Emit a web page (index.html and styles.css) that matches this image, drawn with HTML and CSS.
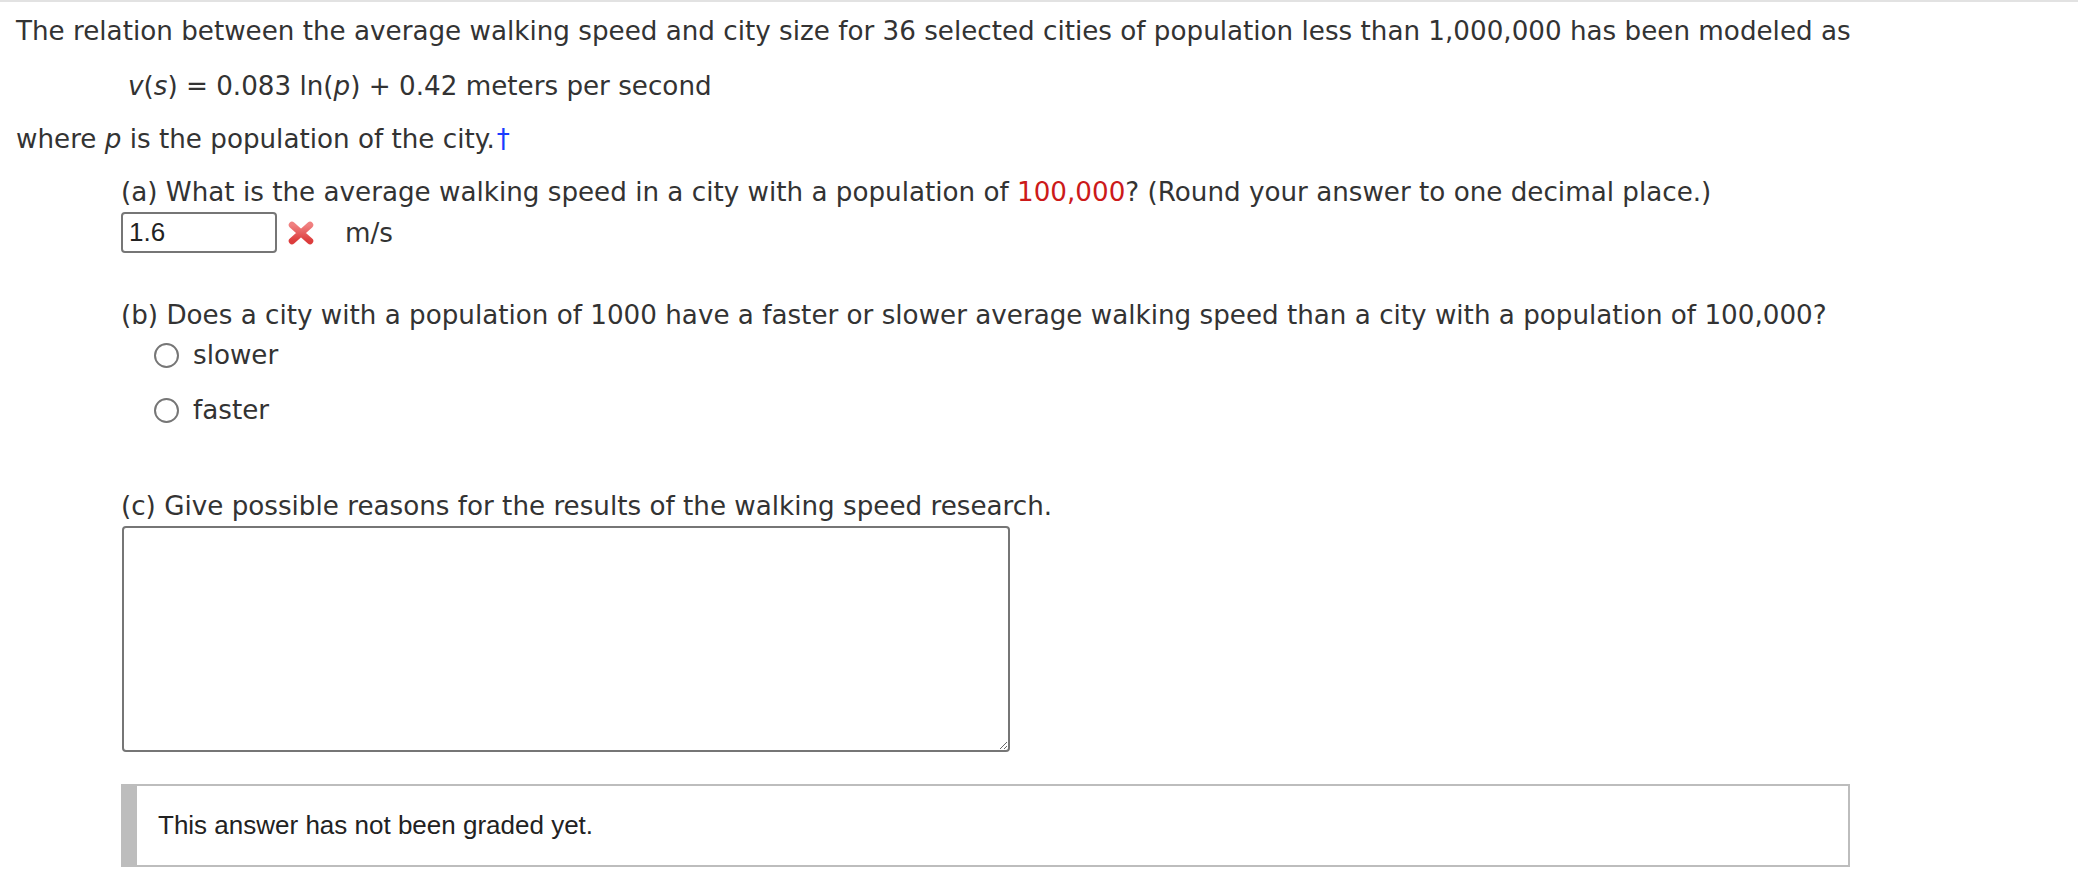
FILE: index.html
```html
<!DOCTYPE html>
<html>
<head>
<meta charset="utf-8">
<link rel="stylesheet" href="styles.css">
</head>
<body>
<div class="page">
  <p class="line intro">The relation between the average walking speed and city size for 36 selected cities of population less than 1,000,000 has been modeled as</p>
  <p class="line formula"><i>v</i>(<i>s</i>) = 0.083 ln(<i>p</i>) + 0.42 meters per second</p>
  <p class="line where">where <i>p</i> is the population of the city.<a class="dagger" href="#">†</a></p>

  <div class="part part-a">
    <p class="line">(a) What is the average walking speed in a city with a population of <span class="red">100,000</span>? (Round your answer to one decimal place.)</p>
    <div class="answer-row">
      <input class="answer" type="text" value="1.6">
      <svg class="xmark" width="28" height="26" viewBox="0 0 28 26" aria-hidden="true">
        <defs>
          <linearGradient id="xg" x1="0" y1="0" x2="0" y2="1">
            <stop offset="0" stop-color="#f08080"/>
            <stop offset="1" stop-color="#dc3c3c"/>
          </linearGradient>
        </defs>
        <path d="M5 5 L23 21 M23 5 L5 21" stroke="url(#xg)" stroke-width="6.5" stroke-linecap="round" fill="none"/>
      </svg>
      <span class="unit">m/s</span>
    </div>
  </div>

  <div class="part part-b">
    <p class="line">(b) Does a city with a population of 1000 have a faster or slower average walking speed than a city with a population of 100,000?</p>
    <label class="choice first"><input type="radio" name="b"><span>slower</span></label>
    <label class="choice second"><input type="radio" name="b"><span>faster</span></label>
  </div>

  <div class="part part-c">
    <p class="line">(c) Give possible reasons for the results of the walking speed research.</p>
    <textarea class="essay"></textarea>
    <div class="status">This answer has not been graded yet.</div>
  </div>
</div>
</body>
</html>
```

FILE: styles.css
```css
html, body {
  margin: 0;
  padding: 0;
  background: #fff;
}
body {
  border-top: 2px solid #e2e2e2;
  font-family: "DejaVu Sans", Verdana, sans-serif;
  font-size: 26.2px;
  color: #333;
}
.page {
  padding: 12px 0 0 16px;
}
.line {
  margin: 0;
  line-height: 34px;
  white-space: nowrap;
}
.formula {
  margin-top: 21px;
  padding-left: 112px;
}
.where {
  margin-top: 19px;
}
.dagger {
  color: #1a3cff;
  text-decoration: none;
  margin-left: 2px;
}
.part {
  margin-left: 105px;
}
.part-a {
  margin-top: 19px;
}
.red {
  color: #cc1a1a;
}
.answer-row {
  display: flex;
  align-items: center;
  margin-top: 3px;
  height: 41px;
}
.answer {
  box-sizing: border-box;
  width: 156px;
  height: 41px;
  margin: 0;
  border: 2px solid #767676;
  border-radius: 4px;
  padding: 0 6px;
  font-family: "Liberation Sans", Arial, sans-serif;
  font-size: 26px;
  color: #222;
  outline: none;
}
.xmark {
  margin-left: 10px;
  display: block;
}
.unit {
  margin-left: 30px;
  line-height: 34px;
}
.part-b {
  margin-top: 45px;
}
.choice {
  display: flex;
  align-items: center;
  height: 34px;
  margin-left: 33px;
}
.choice.first {
  margin-top: 6px;
}
.choice.second {
  margin-top: 21px;
}
.choice input {
  appearance: none;
  -webkit-appearance: none;
  box-sizing: border-box;
  width: 25px;
  height: 25px;
  margin: 0 14px 0 0;
  border: 2px solid #767676;
  border-radius: 50%;
  background: #fff;
}
.part-c {
  margin-top: 62px;
}
.essay {
  display: block;
  box-sizing: border-box;
  width: 888px;
  height: 226px;
  margin: 3px 0 0 1px;
  border: 2px solid #767676;
  border-radius: 4px;
  padding: 4px;
  font-family: "Liberation Sans", Arial, sans-serif;
  font-size: 24px;
}
.status {
  box-sizing: border-box;
  width: 1729px;
  height: 83px;
  margin-top: 32px;
  border: 2px solid #bdbdbd;
  border-left: 16px solid #bdbdbd;
  padding-left: 21px;
  display: flex;
  align-items: center;
  font-family: "Liberation Sans", Arial, sans-serif;
  font-size: 26px;
  color: #222;
}
```
